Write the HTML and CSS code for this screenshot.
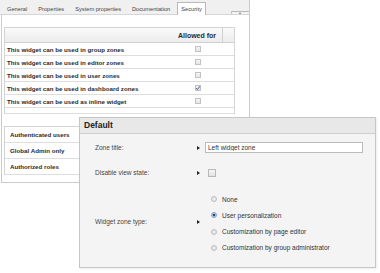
FILE: index.html
```html
<!DOCTYPE html>
<html>
<head>
	<meta charset="utf-8">
	<meta name="viewport" content="width=device-width, initial-scale=1">
	<title>Widget security</title>
	<link rel="stylesheet" href="styles.css">
</head>
<body>
<div class="panel">
	<div class="tabs">
		<span class="tab">General</span>
		<span class="tab">Properties</span>
		<span class="tab">System properties</span>
		<span class="tab">Documentation</span>
		<span class="tab active">Security</span>
		<span class="tab-scroll"><i></i></span>
	</div>
	<div class="content">
		<div class="grid zones">
			<div class="row head">
				<span class="name"></span>
				<span class="allowed">Allowed for</span>
				<span class="end"></span>
			</div>
			<div class="row">
				<span class="name">This widget can be used in group zones</span>
				<span class="allowed"><i class="check"></i></span>
				<span class="end"></span>
			</div>
			<div class="row">
				<span class="name">This widget can be used in editor zones</span>
				<span class="allowed"><i class="check"></i></span>
				<span class="end"></span>
			</div>
			<div class="row">
				<span class="name">This widget can be used in user zones</span>
				<span class="allowed"><i class="check"></i></span>
				<span class="end"></span>
			</div>
			<div class="row">
				<span class="name">This widget can be used in dashboard zones</span>
				<span class="allowed"><i class="check on"><svg width="6" height="6" viewBox="0 0 6 6"><path d="M1.2 3.2 L2.4 4.6 L4.9 1.2" fill="none" stroke="#35589a" stroke-width="1"/></svg></i></span>
				<span class="end"></span>
			</div>
			<div class="row">
				<span class="name">This widget can be used as inline widget</span>
				<span class="allowed"><i class="check"></i></span>
				<span class="end"></span>
			</div>
			<div class="row blank"></div>
		</div>
		<div class="grid roles">
			<div class="row"><span class="name">Authenticated users</span></div>
			<div class="row"><span class="name">Global Admin only</span></div>
			<div class="row"><span class="name">Authorized roles</span></div>
		</div>
	</div>
</div>

<div class="dialog">
	<div class="dialog-head">Default</div>
	<div class="dialog-body">
		<label class="label">Zone title:</label>
		<span class="arrow"></span>
		<input type="text" class="text" value="Left widget zone">

		<label class="label">Disable view state:</label>
		<span class="arrow"></span>
		<span><i class="box"></i></span>

		<label class="label">Widget zone type:</label>
		<span class="arrow"></span>
		<div class="radios">
			<div class="radio"><i></i>None</div>
			<div class="radio"><i class="on"></i>User personalization</div>
			<div class="radio"><i></i>Customization by page editor</div>
			<div class="radio"><i></i>Customization by group administrator</div>
		</div>
	</div>
</div>
</body>
</html>
```

FILE: styles.css
```css
*
{
	margin: 0;
	padding: 0;
	box-sizing: border-box;
	font-family: "Liberation Sans", Arial, sans-serif;
}
body
{
	background: #fff;
	color: #222;
}
.panel
{
	width: 250px;
	border-right: 1px solid #cbcbcb;
}
.tabs
{
	display: flex;
	align-items: flex-end;
	height: 15px;
	padding-left: 2px;
	background: #f0f0f0;
	border-bottom: 1px solid #d6d6d6;
}
.tab
{
	height: 12px;
	line-height: 12px;
	padding: 1px 5px 0;
	margin-right: 1px;
	font-size: 5.7px;
	color: #444;
	white-space: nowrap;
}
.tab.active
{
	margin-left: 1px;
	padding: 0 3px;
	height: 13px;
	margin-bottom: -1px;
	background: #fff;
	border: 1px solid #b9b9b9;
	border-bottom: none;
}
.tab-scroll
{
	position: relative;
	margin-left: auto;
	width: 18px;
	height: 3px;
	border-top: 1px solid #b9b9b9;
	border-left: 1px solid #c9c9c9;
	background: #f4f4f4;
}
.tab-scroll i
{
	position: absolute;
	left: 7px;
	top: 0;
	border-left: 1.5px solid transparent;
	border-right: 1.5px solid transparent;
	border-bottom: 2px solid #777;
}
.content
{
	margin-left: 1px;
	border-left: 1px solid #cbcbcb;
	border-bottom: 1px solid #cbcbcb;
	padding: 12px 0 9px 2px;
	height: 168px;
}
.grid
{
	width: 231px;
	border-left: 1px solid #d4d4d4;
	border-right: 1px solid #d4d4d4;
}
.row
{
	display: flex;
	align-items: center;
	height: 13px;
	border-bottom: 1px solid #dedede;
	font-size: 6.2px;
	font-weight: bold;
	color: #2a2a2a;
	white-space: nowrap;
}
.row .name
{
	width: 167px;
	padding-left: 2px;
}
.row .allowed
{
	display: flex;
	justify-content: center;
	width: 51px;
}
.row .end
{
	width: 11px;
}
.zones .head
{
	height: 16px;
	border-top: 1px solid #d4d4d4;
	border-bottom: 1px solid #d0d0d0;
	background: linear-gradient(#fafafa, #ececec);
	font-size: 7px;
}
.zones .head .allowed,
.zones .head .end
{
	align-self: stretch;
	align-items: center;
}
.zones .head .allowed
{
	border-right: 1px solid #d0d0d0;
}
.zones .blank
{
	height: 6px;
}
.check
{
	display: block;
	width: 6px;
	height: 6px;
	border: 1px solid #c2c2c2;
	background: linear-gradient(#f4f4f4, #e6e6e6);
}
.check svg
{
	display: block;
	margin: -1px;
}
.roles
{
	margin-top: 12px;
	border-top: 1px solid #d4d4d4;
}
.roles .row
{
	height: 16px;
}
.roles .row .name
{
	padding-left: 5px;
}
.dialog
{
	position: absolute;
	left: 79px;
	top: 117px;
	width: 297px;
	height: 151px;
	border: 1px solid #c6c6c6;
	background: #f4f4f4;
	box-shadow: 1px 1px 2px rgba(0, 0, 0, 0.08);
}
.dialog-head
{
	height: 16px;
	line-height: 15px;
	padding-left: 4px;
	background: #e8e8e8;
	border-bottom: 1px solid #cfcfcf;
	font-size: 8.5px;
	font-weight: bold;
	color: #222;
}
.dialog-body
{
	display: grid;
	grid-template-columns: 101px 9px 1fr;
	grid-template-rows: 21px 29px auto;
	align-items: center;
	padding: 3px 12px 11px 15px;
	font-size: 6.5px;
	color: #444;
}
.label
{
	font-size: 6.5px;
}
.arrow
{
	width: 0;
	height: 0;
	margin-left: 1px;
	border-left: 3px solid #222;
	border-top: 2px solid transparent;
	border-bottom: 2px solid transparent;
}
.text
{
	height: 11px;
	width: 100%;
	padding: 0 2px;
	border: 1px solid #bcbcbc;
	background: #fff;
	font-size: 6.5px;
	color: #333;
	outline: none;
}
.box
{
	display: block;
	width: 8px;
	height: 8px;
	margin-left: 3px;
	border: 1px solid #b8b8b8;
	background: linear-gradient(#f6f6f6, #e2e2e2);
}
.radios
{
	padding-top: 4px;
}
.radio
{
	display: flex;
	align-items: center;
	height: 16.25px;
	color: #333;
}
.radio i
{
	width: 6px;
	height: 6px;
	margin: 0 5px 0 6px;
	border-radius: 50%;
	border: 1px solid #bdbdbd;
	background: radial-gradient(#f2f2f2, #dcdcdc);
}
.radio i.on
{
	border-color: #8aa3c4;
	background: radial-gradient(#1f4f8c 40%, #cfd9e6 60%);
}
```
